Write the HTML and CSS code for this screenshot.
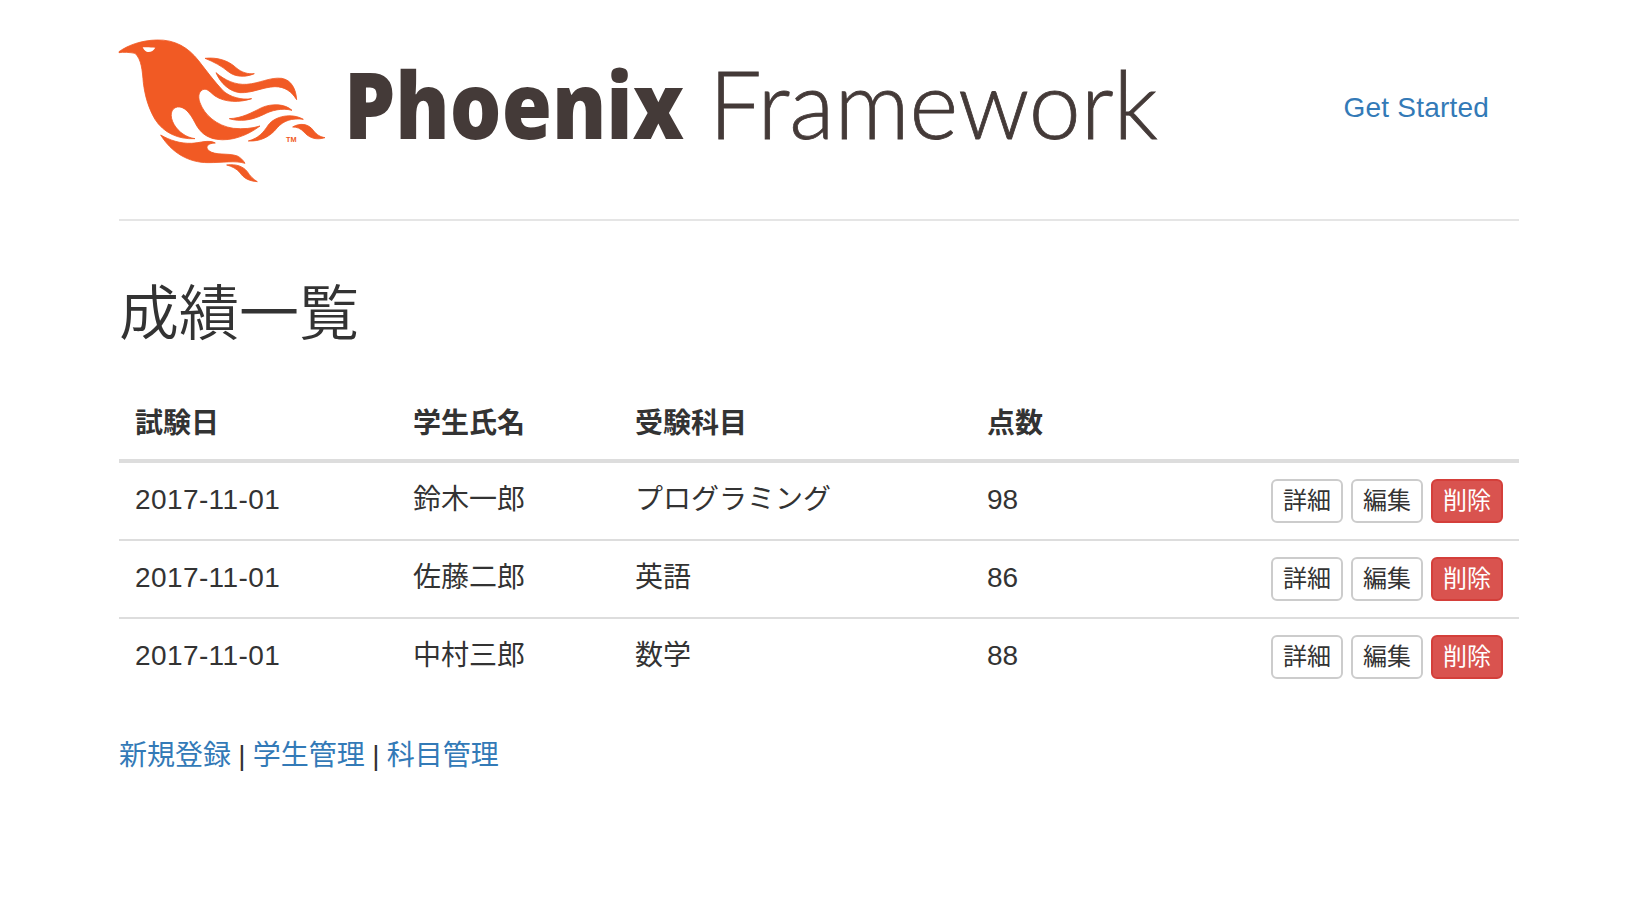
FILE: index.html
```html
<!DOCTYPE html>
<html lang="ja">
<head>
<meta charset="utf-8">
<title>成績一覧</title>
<link rel="stylesheet" href="styles.css">
</head>
<body>
<div class="container">
  <header class="header">
    <svg class="logo" viewBox="0 0 1044 180" width="1044" height="180" role="img" aria-label="Phoenix Framework">
      <g transform="scale(.3333) translate(-57 -30)">
        <path class="flame" fill-rule="evenodd" d="M57 92C85 72 125 58 170 57C225 55 265 80 295 118C320 150 340 178 370 210C390 228 425 238 455 233C420 245 375 245 345 225C330 213 322 203 312 205C298 208 292 225 300 245C312 280 350 315 400 322C430 325 458 322 480 315C445 342 395 362 350 355C320 350 300 335 285 305C270 275 252 255 232 258C212 262 208 285 222 310C235 333 260 350 285 353C235 356 190 335 165 295C145 260 135 225 130 185C127 150 125 115 105 97C90 94 70 93 57 95Z"/>
        <path class="eye" d="M128 79C140 78 155 79 166 80C160 90 150 95 140 92C135 90 131 85 128 79Z"/>
        <path class="flame" d="M315 112C350 108 385 118 408 140C425 155 445 160 463 158C435 170 405 168 385 152C365 135 340 122 315 112Z"/>
        <path class="flame" d="M348 155C375 178 405 192 440 190C480 187 510 168 545 172C575 177 588 205 590 236C575 212 555 197 525 197C490 198 455 217 420 215C390 212 362 188 348 155Z"/>
        <path class="flame" d="M388 293C425 292 455 275 485 260C515 247 555 248 576 268C545 260 515 268 490 281C455 298 420 303 388 293Z"/>
        <path class="flame" d="M445 360C475 352 490 335 505 312C525 285 575 275 610 295C575 290 550 300 532 320C510 348 480 362 445 360Z"/>
        <path class="flame" d="M578 318C600 305 625 308 640 328C650 342 662 348 675 350C650 358 628 352 612 333C602 322 590 318 578 318Z"/>
        <path class="flame" d="M182 342C210 358 240 368 275 367C300 366 325 355 346 366C325 367 315 375 325 388C345 405 385 395 412 405C422 410 430 418 435 427C405 418 370 425 325 425C265 425 215 395 182 342Z"/>
        <path class="flame" d="M380 432C410 428 430 437 442 452C450 465 460 475 472 482C445 480 430 470 420 455C410 443 395 436 380 432Z"/>
        <text class="tm" x="558" y="362">TM</text>
      </g>
      <text class="word-bold" x="225" y="108" textLength="340" lengthAdjust="spacingAndGlyphs">Phoenix</text>
      <text class="word-light" x="590" y="108" textLength="449" lengthAdjust="spacingAndGlyphs">Framework</text>
    </svg>
    <nav class="nav"><a href="#">Get Started</a></nav>
  </header>

  <h2 class="title">成績一覧</h2>

  <table class="table">
    <thead>
      <tr>
        <th class="col-date">試験日</th>
        <th class="col-name">学生氏名</th>
        <th class="col-subject">受験科目</th>
        <th>点数</th>
        <th></th>
      </tr>
    </thead>
    <tbody>
      <tr>
        <td class="date">2017-11-01</td><td>鈴木一郎</td><td>プログラミング</td><td>98</td>
        <td><div class="actions"><a class="btn" href="#">詳細</a><a class="btn" href="#">編集</a><a class="btn btn-danger" href="#">削除</a></div></td>
      </tr>
      <tr>
        <td class="date">2017-11-01</td><td>佐藤二郎</td><td>英語</td><td>86</td>
        <td><div class="actions"><a class="btn" href="#">詳細</a><a class="btn" href="#">編集</a><a class="btn btn-danger" href="#">削除</a></div></td>
      </tr>
      <tr>
        <td class="date">2017-11-01</td><td>中村三郎</td><td>数学</td><td>88</td>
        <td><div class="actions"><a class="btn" href="#">詳細</a><a class="btn" href="#">編集</a><a class="btn btn-danger" href="#">削除</a></div></td>
      </tr>
    </tbody>
  </table>

  <p class="links"><a href="#">新規登録</a> | <a href="#">学生管理</a> | <a href="#">科目管理</a></p>
</div>
</body>
</html>
```
FILE: styles.css
```css
* { box-sizing: border-box; }
html, body { margin: 0; background: #fff; }
body {
  font-family: "Liberation Sans", "Noto Sans CJK JP", sans-serif;
  font-size: 28px;
  line-height: 40px;
  color: #333;
}
a { color: #337ab7; text-decoration: none; }
.container { width: 1400px; margin-left: 119px; }
.header {
  display: flex;
  justify-content: space-between;
  align-items: center;
  height: 221px;
  border-bottom: 2px solid #e5e5e5;
  padding-bottom: 6px;
}
.logo { display: block; flex: none; overflow: visible; margin-top: 28px; }
.flame { fill: #f15a24; stroke: #f15a24; stroke-width: 2.5px; stroke-linejoin: round; }
.eye { fill: #fff; }
.tm { font: 700 22px "Liberation Sans", sans-serif; fill: #f15a24; }
.word-bold { font: 800 92px "Open Sans", sans-serif; fill: #443a38; }
.word-light { font: 300 94px "Lato", sans-serif; fill: #443a38; stroke: #443a38; stroke-width: .8px; }
.nav { padding: 2px 30px 0 0; letter-spacing: .2px; }
.title {
  margin: 61px 0 39px;
  font-size: 60px;
  line-height: 66px;
  font-weight: 350;
}
.table { width: 100%; border-collapse: collapse; table-layout: fixed; margin-bottom: 40px; }
.col-date { width: 278px; }
.col-name { width: 222px; }
.col-subject { width: 352px; }
.table th, .table td { padding: 17px 16px 15px; text-align: left; vertical-align: top; }
.table th { border-bottom: 4px solid #ddd; font-weight: 700; }
.table tbody tr + tr td { border-top: 2px solid #ddd; }
.date { letter-spacing: .4px; }
.actions { display: flex; justify-content: flex-end; gap: 8px; margin: -1px 0 1px; }
.btn {
  display: block;
  padding: 2px 10px;
  font-size: 24px;
  line-height: 36px;
  border: 2px solid #ccc;
  border-radius: 6px;
  color: #333;
  background: #fff;
}
.btn-danger { color: #fff; background: #d9534f; border-color: #d43f3a; }
.links { margin: 0; padding-top: 1px; word-spacing: -.5px; }
```
